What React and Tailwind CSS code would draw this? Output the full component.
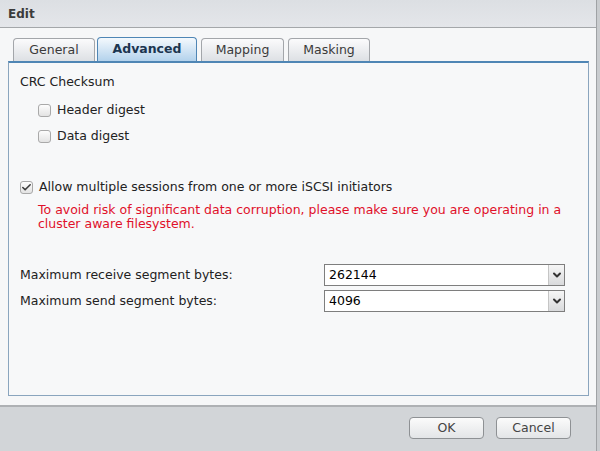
import { Check, ChevronDown } from 'lucide-react';

const font = { fontFamily: 'Verdana, "DejaVu Sans", sans-serif' };

function Tab({ label, active, w, ml }) {
  return (
    <div
      className={
        'flex items-center justify-center rounded-t-[4px] border border-b-0 text-[12.5px] ' +
        (active
          ? 'bg-gradient-to-b from-[#f4f9fd] to-[#b3d2ec] border-[#4f86b5] font-bold text-[#1b3550] h-[24px]'
          : 'bg-gradient-to-b from-[#fbfbfc] to-[#dde0e4] border-[#a3a6aa] text-[#3a3a3a] h-[23px]')
      }
      style={{ width: w, marginLeft: ml }}
    >
      {label}
    </div>
  );
}

function Box({ checked }) {
  return (
    <div className="w-[13px] h-[13px] rounded-[3px] border border-[#a9a9a9] bg-gradient-to-b from-[#fdfdfd] to-[#e3e3e3] flex items-center justify-center">
      {checked && <Check size={11} strokeWidth={3.5} className="text-[#3c3c3c]" />}
    </div>
  );
}

function Select({ value }) {
  return (
    <div className="w-[241px] h-[22px] border border-[#7e7e7e] bg-white flex">
      <div className="flex-1 pl-[4px] flex items-center text-[12.5px] text-black">{value}</div>
      <div className="w-[16px] border-l border-[#c5c5c5] bg-gradient-to-b from-[#f6f6f6] to-[#d9dadc] flex items-center justify-center">
        <ChevronDown size={12} strokeWidth={4} className="text-[#333]" />
      </div>
    </div>
  );
}

export default function App() {
  return (
    <div className="w-[600px] h-[451px] bg-[#c9cccf] flex" style={font}>
      <div className="w-[597px] h-[451px] flex flex-col border-r border-[#9fa2a5]">
        <div className="h-[28px] bg-gradient-to-b from-[#dcdfe3] to-[#e4e6ea] border-b border-[#a4a7aa] flex items-center pl-[8px] text-[12px] font-bold text-[#3b3b3b]">
          Edit
        </div>
        <div className="flex-1 bg-[#f6f7f8] pt-[9px] pl-[8px] pr-[7px] pb-[9px] flex flex-col">
          <div className="flex items-end pl-[5px] h-[24px]">
            <Tab label="General" w={82} ml={0} />
            <Tab label="Advanced" active w={100} ml={2} />
            <Tab label="Mapping" w={83} ml={4} />
            <Tab label="Masking" w={82} ml={4} />
          </div>
          <div className="flex-1 border border-[#8aa5be] border-t-[2px] border-t-[#4f86b5] bg-[#f7f8f9] pl-[11px] pt-[10px] text-[12.5px] text-[#222]">
            <div className="h-[18px] flex items-center">CRC Checksum</div>
            <div className="pl-[18px] mt-[10px] flex flex-col gap-[8px]">
              <div className="h-[18px] flex items-center gap-[6px]"><Box /><span>Header digest</span></div>
              <div className="h-[18px] flex items-center gap-[6px]"><Box /><span>Data digest</span></div>
            </div>
            <div className="mt-[33px] h-[18px] flex items-center gap-[6px]"><Box checked /><span>Allow multiple sessions from one or more iSCSI initiators</span></div>
            <div className="pl-[18px] mt-[7px] text-[#e0102a] leading-[14px] w-[572px]">
              To avoid risk of significant data corruption, please make sure you are operating in a cluster aware filesystem.
            </div>
            <div className="mt-[33px] flex flex-col gap-[4px]">
              <div className="flex items-center">
                <div className="w-[304px]">Maximum receive segment bytes:</div>
                <Select value="262144" />
              </div>
              <div className="flex items-center">
                <div className="w-[304px]">Maximum send segment bytes:</div>
                <Select value="4096" />
              </div>
            </div>
          </div>
        </div>
        <div className="h-[46px] bg-[#d2d5d8] border-t-[2px] border-[#aeb1b4] flex items-center justify-end gap-[12px] pr-[25px] pb-[2px]">
          {['OK', 'Cancel'].map(l => (
            <div key={l} className="w-[75px] h-[22px] rounded-[4px] border border-[#8e9194] bg-gradient-to-b from-[#fbfbfb] to-[#e3e5e7] flex items-center justify-center text-[12.5px] text-[#444]">
              {l}
            </div>
          ))}
        </div>
      </div>
    </div>
  );
}
